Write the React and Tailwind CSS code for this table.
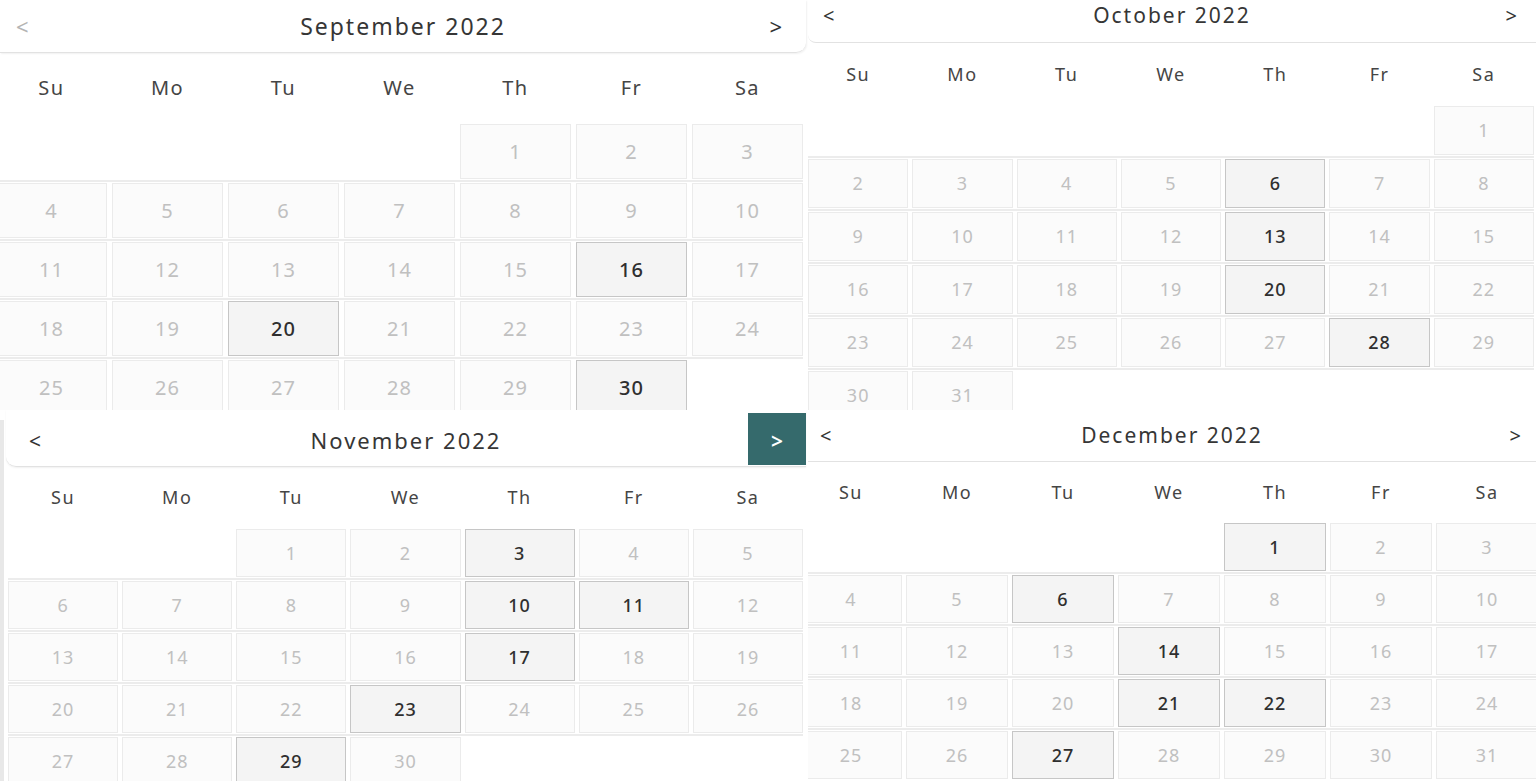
import React from "react";

const DAYS = ["Su", "Mo", "Tu", "We", "Th", "Fr", "Sa"];

function weeks(start, total) {
  const cells = [...Array(start).fill(null), ...Array.from({ length: total }, (_, i) => i + 1)];
  while (cells.length % 7) cells.push(null);
  const rows = [];
  for (let i = 0; i < cells.length; i += 7) rows.push(cells.slice(i, i + 7));
  return rows;
}

const font = { fontFamily: "'Noto Sans', 'Open Sans', sans-serif" };

function Grid({ rows, marked, grid, cellH, num, rowPad }) {
  return (
    <div>
      {rows.map((week, r) => (
        <div key={r} className={`${grid} ${rowPad} ${r > 0 ? "border-t-2 border-[#ececec]" : ""}`}>
          {week.map((d, i) => {
            if (!d) return <div key={i} className={cellH} />;
            const on = marked.includes(d);
            return (
              <div
                key={i}
                className={`${cellH} ${num} tracking-[1px] flex items-center justify-center border ${
                  on ? "bg-[#f4f4f4] border-[#c6c6c6] text-[#2f2f2f] font-medium" : "bg-[#fbfbfb] border-[#ebebeb] text-[#c0c0c0]"
                }`}
              >
                {d}
              </div>
            );
          })}
        </div>
      ))}
    </div>
  );
}

function DayNames({ grid, row, label }) {
  return (
    <div className={`${grid} ${row}`}>
      {DAYS.map((d) => (
        <div key={d} className={`flex items-center justify-center ${label} tracking-[1.5px] text-[#454545]`}>
          {d}
        </div>
      ))}
    </div>
  );
}

export default function App() {
  return (
    <div className="w-[1536px] h-[781px] overflow-hidden bg-white flex flex-col" style={font}>
      {/* top row */}
      <div className="flex h-[410px] overflow-hidden">
        {/* September */}
        <div className="w-[808px] shrink-0 overflow-hidden">
          <div className="w-[806px] h-[53px] grid grid-cols-[1fr_auto_1fr] items-center border-b border-[#e2e2e2] rounded-br-[10px] shadow-[1px_1px_2px_rgba(0,0,0,0.06)]">
            <span className="pl-[16px] text-[22px] text-[#b4b4b4]">&lt;</span>
            <span className="text-[23px] tracking-[2px] text-[#363636]">September 2022</span>
            <span className="justify-self-end pr-[24px] text-[22px] text-[#333]">&gt;</span>
          </div>
          <div className="ml-[-4px] w-[807px]">
            <DayNames grid="grid grid-cols-7 gap-x-[5px]" row="h-[70px]" label="text-[20px]" />
            <Grid
              rows={weeks(4, 30)}
              marked={[16, 20, 30]}
              grid="grid grid-cols-7 gap-x-[5px]"
              rowPad="py-[1px]"
              cellH="h-[55px]"
              num="text-[20px]"
            />
          </div>
        </div>
        {/* October */}
        <div className="w-[728px] shrink-0 overflow-hidden">
          <div className="h-[43px] pb-[10px] grid grid-cols-[1fr_auto_1fr] items-center border-b border-[#e2e2e2] rounded-bl-[8px]">
            <span className="pl-[15px] text-[20px] text-[#333]">&lt;</span>
            <span className="text-[21px] tracking-[2px] text-[#363636]">October 2022</span>
            <span className="justify-self-end pr-[19px] text-[20px] text-[#333]">&gt;</span>
          </div>
          <div className="w-[726px]">
            <DayNames grid="grid grid-cols-7 gap-x-[4px]" row="h-[62px]" label="text-[18px]" />
            <Grid
              rows={weeks(6, 31)}
              marked={[6, 13, 20, 28]}
              grid="grid grid-cols-7 gap-x-[4px]"
              rowPad="py-[1px]"
              cellH="h-[49px]"
              num="text-[18px]"
            />
          </div>
        </div>
      </div>

      {/* bottom row */}
      <div className="flex h-[371px] overflow-hidden">
        {/* November */}
        <div className="w-[808px] shrink-0 flex overflow-hidden">
          <div className="w-[4px] shrink-0 mt-[10px] bg-[#e8e8e8]" />
          <div className="ml-[2px] w-[800px]">
            <div className="h-[57px] grid grid-cols-[1fr_auto_1fr] items-start border-b border-[#e2e2e2] rounded-bl-[10px] shadow-[0_1px_2px_rgba(0,0,0,0.06)]">
              <span className="pl-[23px] pt-[16px] text-[21px] text-[#333]">&lt;</span>
              <span className="pt-[14px] text-[22px] tracking-[2px] text-[#363636]">November 2022</span>
              <div className="justify-self-end w-[58px] h-[52px] mt-[3px] bg-[#356a6c] flex items-center justify-center pt-[6px] text-[21px] text-white font-semibold">
                &gt;
              </div>
            </div>
            <div className="ml-[2px] w-[795px]">
              <DayNames grid="grid grid-cols-7 gap-x-[4px]" row="h-[61px]" label="text-[18px]" />
              <Grid
                rows={weeks(2, 30)}
                marked={[3, 10, 11, 17, 23, 29]}
                grid="grid grid-cols-7 gap-x-[4px]"
                rowPad="py-[1px]"
                cellH="h-[48px]"
                num="text-[18px]"
              />
            </div>
          </div>
        </div>
        {/* December */}
        <div className="w-[728px] shrink-0 overflow-hidden">
          <div className="h-[52px] grid grid-cols-[1fr_auto_1fr] items-center border-b border-[#e2e2e2]">
            <span className="pl-[12px] text-[20px] text-[#333]">&lt;</span>
            <span className="text-[21px] tracking-[2px] text-[#363636]">December 2022</span>
            <span className="justify-self-end pr-[15px] text-[20px] text-[#333]">&gt;</span>
          </div>
          <div className="ml-[-8px] w-[738px]">
            <DayNames grid="grid grid-cols-7 gap-x-[4px]" row="h-[60px]" label="text-[18px]" />
            <Grid
              rows={weeks(4, 31)}
              marked={[1, 6, 14, 21, 22, 27]}
              grid="grid grid-cols-7 gap-x-[4px]"
              rowPad="py-[1px]"
              cellH="h-[48px]"
              num="text-[18px]"
            />
          </div>
        </div>
      </div>
    </div>
  );
}
